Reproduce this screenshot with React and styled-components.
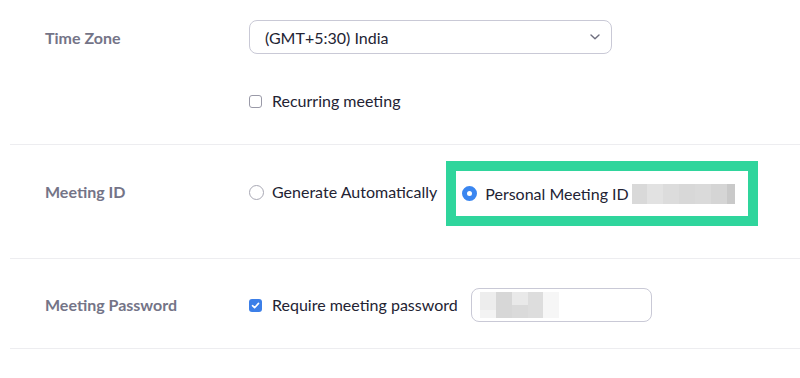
import React from "react";
import styled, { createGlobalStyle } from "styled-components";

const Global = createGlobalStyle`
  html, body { margin: 0; padding: 0; background: #ffffff; }
  body { font-family: Lato, "Open Sans", "Liberation Sans", sans-serif; }
`;

const Page = styled.div`
  width: 800px;
  height: 378px;
  padding-left: 10px;
  box-sizing: border-box;
  overflow: hidden;
`;

const Row = styled.div`
  display: flex;
  align-items: ${(p) => p.$align || "center"};
  padding: ${(p) => p.$pad};
  border-bottom: 1px solid #ededf0;
`;

const Label = styled.div`
  width: 204px;
  flex: none;
  padding-left: 35px;
  font-size: 16px;
  font-weight: 700;
  color: #747487;
  line-height: ${(p) => p.$lh || "20px"};
`;

const Controls = styled.div`
  display: flex;
  flex-direction: column;
  gap: ${(p) => p.$gap || "0px"};
`;

const Inline = styled.div`
  display: flex;
  align-items: center;
`;

const Select = styled.div`
  width: 363px;
  height: 34px;
  box-sizing: border-box;
  border: 1px solid #c9c9d6;
  border-radius: 8px;
  display: flex;
  align-items: center;
  justify-content: space-between;
  padding: 0 10px 0 15px;
  font-size: 16px;
  color: #232333;
`;

const Option = styled.label`
  display: flex;
  align-items: center;
  gap: ${(p) => p.$gap || "8px"};
  font-size: 16px;
  color: #232333;
  line-height: 20px;
  white-space: nowrap;
`;

const Box = styled.span`
  width: 13px;
  height: 13px;
  box-sizing: border-box;
  border-radius: 3px;
  border: ${(p) => (p.$checked ? "none" : "1px solid #9a9aa8")};
  background: ${(p) => (p.$checked ? "#3c7fe8" : "#fff")};
  display: inline-flex;
  align-items: center;
  justify-content: center;
  margin-right: 1px;
`;

const Radio = styled.span`
  width: 15px;
  height: 15px;
  box-sizing: border-box;
  border-radius: 50%;
  border: ${(p) => (p.$checked ? "5px solid #3a86f0" : "1px solid #a8a8b4")};
  background: #fff;
  display: inline-block;
`;

const Highlight = styled.div`
  margin-left: 9px;
  border: 10px solid #2fd59c;
  height: 65px;
  box-sizing: border-box;
  display: flex;
  align-items: center;
  padding: 0 13px 0 6px;
  margin-top: 3px;
`;

const Blur = styled.span`
  margin-left: -5px;
  display: inline-flex;
`;

const Input = styled.div`
  width: 181px;
  height: 34px;
  box-sizing: border-box;
  border: 1px solid #c9c9d6;
  border-radius: 8px;
  margin-left: 13px;
  display: flex;
  align-items: center;
  padding-left: 8px;
`;

const Mosaic = ({ cells, w, h }) => (
  <svg width={w} height={h} style={{ display: "block" }}>
    {cells.map((c, i) => (
      <rect key={i} x={c[0]} y={c[1]} width={c[2]} height={c[3]} fill={c[4]} />
    ))}
  </svg>
);

const idCells = [
  [0, 0, 15, 20, "#d9d9d9"],
  [15, 0, 16, 20, "#e2e2e2"],
  [31, 0, 16, 20, "#dcdcdc"],
  [47, 0, 16, 20, "#d8d8d8"],
  [63, 0, 16, 20, "#dadada"],
  [79, 0, 16, 20, "#d5d5d5"],
  [95, 0, 8, 20, "#c9c9c9"],
];

const pwCells = [
  [0, 0, 16, 26, "#ededed"],
  [0, 18, 16, 8, "#f3f3f3"],
  [16, 0, 16, 26, "#d7d7d7"],
  [32, 0, 16, 13, "#e9e9e9"],
  [32, 13, 16, 13, "#dadada"],
  [48, 0, 15, 26, "#dddddd"],
  [63, 0, 16, 26, "#f6f6f6"],
];

const Chevron = () => (
  <svg width="12" height="8" viewBox="0 0 12 8">
    <path d="M2 2 L6 5.8 L10 2" fill="none" stroke="#6e6e7e" strokeWidth="1.4" strokeLinecap="round" strokeLinejoin="round" />
  </svg>
);

const Check = () => (
  <svg width="9" height="9" viewBox="0 0 9 9">
    <path d="M1.5 4.7 L3.6 6.7 L7.5 2.4" fill="none" stroke="#fff" strokeWidth="1.6" strokeLinecap="round" strokeLinejoin="round" />
  </svg>
);

export default function App() {
  return (
    <>
      <Global />
      <Page>
        <Row $align="flex-start" $pad="20px 0 33px 0">
          <Label $lh="36px">Time Zone</Label>
          <Controls $gap="37px">
            <Select>
              <span>(GMT+5:30) India</span>
              <Chevron />
            </Select>
            <Option $gap="9px">
              <Box />
              Recurring meeting
            </Option>
          </Controls>
        </Row>
        <Row $pad="13px 0 32px 0">
          <Label>Meeting ID</Label>
          <Inline>
            <Option>
              <Radio />
              Generate Automatically
            </Option>
            <Highlight>
              <Option>
                <Radio $checked />
                Personal Meeting ID
                <Blur>
                  <Mosaic cells={idCells} w={103} h={20} />
                </Blur>
              </Option>
            </Highlight>
          </Inline>
        </Row>
        <Row $pad="29px 0 26px 0">
          <Label>Meeting Password</Label>
          <Inline>
            <Option $gap="9px">
              <Box $checked>
                <Check />
              </Box>
              Require meeting password
            </Option>
            <Input>
              <Mosaic cells={pwCells} w={79} h={26} />
            </Input>
          </Inline>
        </Row>
      </Page>
    </>
  );
}
